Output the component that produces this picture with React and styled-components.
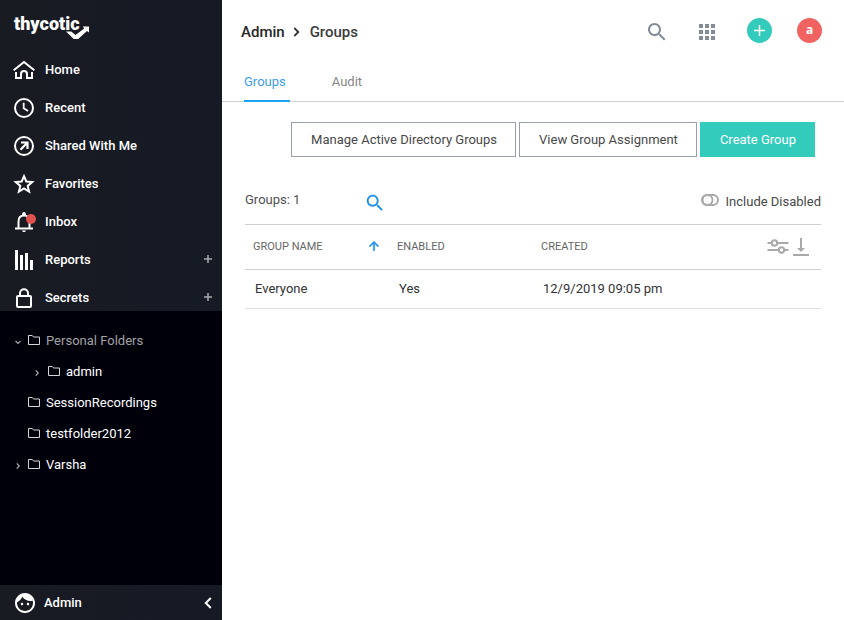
import React from "react";
import styled, { createGlobalStyle } from "styled-components";

const GlobalStyle = createGlobalStyle`
  *, *::before, *::after { box-sizing: border-box; }
  body {
    margin: 0;
    background: #fff;
    color: #333;
    font-family: Roboto, "Liberation Sans", sans-serif;
    font-size: 13px;
    line-height: 20px;
  }
  button {
    margin: 0;
    padding: 0;
    border: 0;
    background: none;
    color: inherit;
    font: inherit;
    cursor: pointer;
  }
  a { color: inherit; text-decoration: none; }
  svg { display: block; flex: none; }
`;

const Shell = styled.div`
  display: grid;
  grid-template-columns: 222px minmax(0, 1fr);
  min-height: 100vh;
`;

/* Sidebar */

const Sidebar = styled.aside`
  display: flex;
  flex-direction: column;
  background: #00000b;
  color: #fff;
`;

const SidebarTop = styled.div`
  background: linear-gradient(90deg, #191b22, #151a25);
`;

const Logo = styled.a`
  display: flex;
  align-items: flex-start;
  position: relative;
  height: 57px;
  padding: 14px 14px 0;
  font-size: 18px;
  font-weight: 900;
`;

const LogoMark = styled.svg`
  position: absolute;
  left: 66px;
  top: 25px;
`;

const NavList = styled.ul`
  display: grid;
  gap: 12px;
  margin: 0;
  padding: 0;
  list-style: none;
`;

const NavItem = styled.li`
  display: flex;
  align-items: center;
  justify-content: space-between;
  height: 26px;
  padding: 0 10px 0 12px;
`;

const NavLink = styled.a`
  display: flex;
  align-items: center;
  gap: 9px;
  font-weight: 500;
`;

const ExpandButton = styled.button`
  padding-bottom: 2px;
  color: #a9abb0;
`;

const FolderList = styled.ul`
  flex: 1;
  margin: 0;
  padding: 14px 0 0;
  list-style: none;
`;

const FolderRow = styled.li`
  display: flex;
  align-items: center;
  height: 31px;
  padding-left: ${(p) => (p.$nested ? 33 : 14)}px;
  color: ${(p) => (p.$muted ? "#a3a3a3" : "#fff")};
`;

const TwistySlot = styled.span`
  display: flex;
  width: ${(p) => (p.$nested ? 15 : 14)}px;
  color: #aaa;
`;

const FolderLink = styled.a`
  display: flex;
  align-items: center;
  gap: 6px;

  svg { margin-bottom: 2px; }
`;

const SidebarFooter = styled.footer`
  display: flex;
  align-items: center;
  justify-content: space-between;
  height: 35px;
  padding: 0 10px 0 13px;
  background: linear-gradient(90deg, #191b22, #151a25);
`;

const UserLink = styled.a`
  display: flex;
  align-items: center;
  gap: 7px;
  font-weight: 500;
`;

/* Main area */

const TopBar = styled.header`
  display: flex;
  align-items: center;
  justify-content: space-between;
  height: 64px;
  padding: 0 22px 0 19px;
`;

const Breadcrumb = styled.nav`
  display: flex;
  align-items: center;
  font-size: 15px;
  font-weight: 500;
  color: #3c3c3c;

  a { color: #262626; }
  svg { margin: 0 10px 0 8px; }
`;

const Tools = styled.div`
  display: flex;
  align-items: center;
  gap: 26px;
  color: #828c98;
`;

const RoundTools = styled.div`
  display: flex;
  gap: 25px;
  padding: 0 0 4px 2px;
`;

const Round = styled.button`
  display: grid;
  place-items: center;
  width: 25px;
  height: 25px;
  border-radius: 50%;
  background: ${(p) => p.$color};
  color: #fff;
  font-family: "Open Sans", sans-serif;
  font-size: 12px;
  font-weight: 700;
  line-height: 22px;
`;

const Tabs = styled.nav`
  display: flex;
  gap: 42px;
  padding-left: 22px;
  box-shadow: inset 0 -1px #cfd0d1;
`;

const Tab = styled.button`
  height: 38px;
  padding-right: 4px;
  border-bottom: 2px solid ${(p) => (p.$active ? "#1ea3f5" : "transparent")};
  color: ${(p) => (p.$active ? "#3b9eea" : "#858585")};
`;

const Actions = styled.div`
  display: flex;
  flex-wrap: wrap;
  justify-content: flex-end;
  gap: 3px;
  padding: 20px 29px 0;
`;

const ActionButton = styled.button`
  height: 35px;
  padding: 0 18px 0 19px;
  border: 1px solid ${(p) => (p.$primary ? "#33cbbb" : "#97a0ab")};
  background: ${(p) => (p.$primary ? "#33cbbb" : "#fff")};
  color: ${(p) => (p.$primary ? "#fff" : "#484848")};
`;

const Panel = styled.section`
  padding: 22px 23px 0;
`;

const PanelBar = styled.div`
  display: flex;
  align-items: center;
  justify-content: space-between;
  height: 45px;
`;

const CountGroup = styled.div`
  display: grid;
  grid-template-columns: 119px auto;
  align-items: center;
  color: #505050;
`;

const Count = styled.span`
  padding-bottom: 4px;
`;

const SearchButton = styled.button`
  padding-top: 2px;
  color: #1c8ff0;
`;

const Toggle = styled.label`
  display: flex;
  align-items: center;
  gap: 7px;
  position: relative;
  color: #484848;
  cursor: pointer;

  input {
    position: absolute;
    inset: 0;
    margin: 0;
    opacity: 0;
    cursor: pointer;
  }
  svg { margin-bottom: 3px; }
`;

const Table = styled.table`
  width: 100%;
  table-layout: fixed;
  border-spacing: 0;
  border-top: 1px solid #cfcfcf;
  text-align: left;

  th {
    height: 45px;
    padding: 0 8px;
    border-bottom: 1px solid #cfcfcf;
    color: #666;
    font-size: 11px;
    font-weight: 400;
  }
  td {
    height: 39px;
    padding: 0 10px;
    border-bottom: 1px solid #dfe1e2;
    white-space: nowrap;
  }
`;

const SortHeader = styled.button`
  display: flex;
  align-items: center;
  justify-content: space-between;
  width: 100%;

  svg {
    margin-bottom: 2px;
    color: #1c8ff0;
  }
`;

const TableTools = styled.div`
  display: flex;
  justify-content: flex-end;
  gap: 4px;
  padding-right: 4px;
  color: #a9a9a9;
`;

/* Icons */

function Icon({ size = 24, children }) {
  return (
    <svg width={size} height={size} viewBox="0 0 24 24" fill="currentColor" aria-hidden="true">
      {children}
    </svg>
  );
}

function LineIcon({ children }) {
  return (
    <svg width="24" height="24" viewBox="0 0 24 24" fill="none" stroke="currentColor" strokeWidth="2" aria-hidden="true">
      {children}
    </svg>
  );
}

const HomeIcon = () => (
  <LineIcon>
    <path d="M1.7 12.2 12 4l10.3 8.2" />
    <path d="M4 14v6h5v-4a3 3 0 0 1 6 0v4h5v-6" />
  </LineIcon>
);

const RecentIcon = () => (
  <LineIcon>
    <circle cx="12" cy="12" r="9" />
    <path d="M11.7 6.8v5.5l4.4 2.6" strokeWidth="1.8" />
  </LineIcon>
);

const SharedIcon = () => (
  <LineIcon>
    <circle cx="12" cy="12" r="9" />
    <path d="M9 8.5h6.5V15M15.3 8.7 8.5 15.7" strokeWidth="2.2" />
  </LineIcon>
);

const StarIcon = () => (
  <Icon>
    <path
      d="M12 4.200l2.300 5.300 5.900.5-4.500 3.900 1.400 5.700L12 16.500l-5.100 3.100 1.400-5.700L3.800 10l5.900-.5z"
      fill="none"
      stroke="currentColor"
      strokeWidth="2"
    />
  </Icon>
);

const InboxIcon = () => (
  <LineIcon>
    <path d="M6.500 18v-6.500C6.500 7.500 8.500 5.500 12 5.500s5.500 2 5.500 6V18" />
    <path d="M3 18.500h18" />
    <path d="M10 5C10 3 10.800 2 12 2s2 1 2 3zM10 20.500h4c-.4 1-1 1.500-2 1.500s-1.600-.5-2-1.500z" fill="currentColor" stroke="none" />
    <circle cx="19" cy="9" r="5" fill="#e0524f" stroke="none" />
  </LineIcon>
);

const ReportsIcon = () => (
  <Icon>
    <path d="M3 2h3v20H3zM8 7h3v15H8zM13 5h3v17h-3zM18 12h3v10h-3z" />
  </Icon>
);

const LockIcon = () => (
  <LineIcon>
    <rect x="5" y="10" width="14" height="11" rx="1" />
    <path d="M8 10V7.200a4 4 0 0 1 8 0V10" />
  </LineIcon>
);

const PlusIcon = ({ size, weight }) => (
  <svg width={size} height={size} viewBox={`0 0 ${size} ${size}`} stroke="currentColor" strokeWidth={weight} aria-hidden="true">
    <path d={`M${size / 2} 0v${size}M0 ${size / 2}h${size}`} />
  </svg>
);

const FolderIcon = () => (
  <svg width="12" height="12" viewBox="0 0 12 12" fill="none" stroke="#d6d6d6" aria-hidden="true">
    <path d="M.5 1.500h3.800l1.200 1.500h6v7.500H.5z" />
  </svg>
);

const Twisty = ({ open }) => (
  <svg width="8" height="8" viewBox="0 0 8 8" fill="none" stroke="currentColor" strokeWidth="1.200" aria-hidden="true">
    <path d={open ? "M1.500 4 4 6.500 6.500 4" : "M2.800 2.300 5.200 5 2.800 7.700"} />
  </svg>
);

const SearchIcon = ({ size }) => (
  <Icon size={size}>
    <path d="M15.5 14h-.79l-.28-.27C15.41 12.59 16 11.11 16 9.5 16 5.91 13.09 3 9.500 3S3 5.910 3 9.500 5.910 16 9.500 16c1.610 0 3.090-.59 4.230-1.570l.27.28v.79l5 4.990L20.490 19l-4.990-5zm-6 0C7.010 14 5 11.990 5 9.500S7.010 5 9.500 5 14 7.010 14 9.500 11.990 14 9.500 14z" />
  </Icon>
);

const AppsIcon = () => (
  <Icon>
    <path d="M4 8h4V4H4v4zm6 12h4v-4h-4v4zm-6 0h4v-4H4v4zm0-6h4v-4H4v4zm6 0h4v-4h-4v4zm6-10v4h4V4h-4zm-6 4h4V4h-4v4zm6 6h4v-4h-4v4zm0 6h4v-4h-4v4z" />
  </Icon>
);

const FaceIcon = () => (
  <Icon>
    <path d="M9 11.750c-.69 0-1.250.56-1.250 1.250s.56 1.250 1.250 1.250 1.250-.56 1.250-1.250-.56-1.250-1.250-1.250zm6 0c-.69 0-1.250.56-1.250 1.250s.56 1.250 1.250 1.250 1.250-.56 1.250-1.250-.56-1.250-1.250-1.250zM12 2C6.480 2 2 6.480 2 12s4.480 10 10 10 10-4.480 10-10S17.520 2 12 2zm0 18c-4.410 0-8-3.590-8-8 0-.29.02-.58.05-.86 2.360-1.050 4.230-2.980 5.210-5.370C11.070 8.330 14.050 10 17.420 10c.78 0 1.530-.09 2.250-.26.21.71.33 1.470.33 2.260 0 4.410-3.590 8-8 8z" />
  </Icon>
);

const navItems = [
  { label: "Home", Glyph: HomeIcon },
  { label: "Recent", Glyph: RecentIcon },
  { label: "Shared With Me", Glyph: SharedIcon },
  { label: "Favorites", Glyph: StarIcon },
  { label: "Inbox", Glyph: InboxIcon },
  { label: "Reports", Glyph: ReportsIcon, expandable: true },
  { label: "Secrets", Glyph: LockIcon, expandable: true },
];

const folders = [
  { label: "Personal Folders", twisty: "open", muted: true },
  { label: "admin", twisty: "closed", nested: true },
  { label: "SessionRecordings" },
  { label: "testfolder2012" },
  { label: "Varsha", twisty: "closed" },
];

const groups = [{ name: "Everyone", enabled: "Yes", created: "12/9/2019 09:05 pm" }];

export default function App() {
  return (
    <>
      <GlobalStyle />
      <Shell>
        <Sidebar>
          <SidebarTop>
            <Logo href="#">
              thycotic
              <LogoMark width="24" height="15" viewBox="0 0 24 15" fill="#fff" aria-hidden="true">
                <path d="M0 6.500h5.200l4.300 3.600L18.200 3.500 16.800 1.500H23v6l-2-1.500L12.200 14H7.700z" />
              </LogoMark>
            </Logo>
            <nav aria-label="Main">
              <NavList>
                {navItems.map(({ label, Glyph, expandable }) => (
                  <NavItem key={label}>
                    <NavLink href="#">
                      <Glyph />
                      {label}
                    </NavLink>
                    {expandable && (
                      <ExpandButton aria-label={`Expand ${label}`}>
                        <PlusIcon size={8} weight={1.5} />
                      </ExpandButton>
                    )}
                  </NavItem>
                ))}
              </NavList>
            </nav>
          </SidebarTop>
          <FolderList>
            {folders.map((f) => (
              <FolderRow key={f.label} $nested={f.nested} $muted={f.muted}>
                <TwistySlot $nested={f.nested}>{f.twisty && <Twisty open={f.twisty === "open"} />}</TwistySlot>
                <FolderLink href="#">
                  <FolderIcon />
                  {f.label}
                </FolderLink>
              </FolderRow>
            ))}
          </FolderList>
          <SidebarFooter>
            <UserLink href="#">
              <FaceIcon />
              Admin
            </UserLink>
            <button aria-label="Collapse sidebar">
              <svg width="8" height="12" viewBox="0 0 8 12" fill="none" stroke="#fff" strokeWidth="2" aria-hidden="true">
                <path d="M6.800 1 1.800 6l5 5" />
              </svg>
            </button>
          </SidebarFooter>
        </Sidebar>

        <main>
          <TopBar>
            <Breadcrumb aria-label="Breadcrumb">
              <a href="#">Admin</a>
              <svg width="7" height="10" viewBox="0 0 7 10" fill="none" stroke="#333" strokeWidth="1.800" aria-hidden="true">
                <path d="M1.300 1l4 4-4 4" />
              </svg>
              <span>Groups</span>
            </Breadcrumb>
            <Tools>
              <button aria-label="Search">
                <SearchIcon size={24} />
              </button>
              <button aria-label="Apps">
                <AppsIcon />
              </button>
              <RoundTools>
                <Round $color="#33cbbb" aria-label="Add">
                  <PlusIcon size={11} weight={1.5} />
                </Round>
                <Round $color="#f16360">a</Round>
              </RoundTools>
            </Tools>
          </TopBar>
          <Tabs aria-label="Sections">
            <Tab $active>Groups</Tab>
            <Tab>Audit</Tab>
          </Tabs>
          <Actions>
            <ActionButton>Manage Active Directory Groups</ActionButton>
            <ActionButton>View Group Assignment</ActionButton>
            <ActionButton $primary>Create Group</ActionButton>
          </Actions>
          <Panel>
            <PanelBar>
              <CountGroup>
                <Count>Groups: 1</Count>
                <SearchButton aria-label="Search groups">
                  <SearchIcon size={22} />
                </SearchButton>
              </CountGroup>
              <Toggle>
                <input type="checkbox" />
                <svg width="18" height="12" viewBox="0 0 18 12" fill="none" stroke="#a9a9a9" strokeWidth="2" aria-hidden="true">
                  <rect x="1" y="1" width="16" height="10" rx="5" />
                  <circle cx="6.500" cy="6" r="5" />
                </svg>
                Include Disabled
              </Toggle>
            </PanelBar>
            <Table>
              <thead>
                <tr>
                  <th scope="col">
                    <SortHeader>
                      GROUP NAME
                      <Icon size={14}>
                        <path d="M4 12l1.410 1.410L11 7.830V20h2V7.830l5.580 5.590L20 12l-8-8-8 8z" stroke="currentColor" />
                      </Icon>
                    </SortHeader>
                  </th>
                  <th scope="col">ENABLED</th>
                  <th scope="col">CREATED</th>
                  <th>
                    <TableTools>
                      <button aria-label="Columns">
                        <svg width="22" height="18" viewBox="0 0 22 18" fill="none" stroke="currentColor" strokeWidth="2" aria-hidden="true">
                          <path d="M.5 5h4M10.500 5h11M.5 12h11M17.500 12h4" />
                          <circle cx="7.500" cy="5" r="2.700" />
                          <circle cx="14.500" cy="12" r="2.700" />
                        </svg>
                      </button>
                      <button aria-label="Download">
                        <svg width="16" height="18" viewBox="0 0 16 18" fill="currentColor" aria-hidden="true">
                          <path d="M7 0h2v10h3l-4 4-4-4h3zM0 16h16v2H0z" />
                        </svg>
                      </button>
                    </TableTools>
                  </th>
                </tr>
              </thead>
              <tbody>
                {groups.map((g) => (
                  <tr key={g.name}>
                    <td>{g.name}</td>
                    <td>{g.enabled}</td>
                    <td>{g.created}</td>
                    <td />
                  </tr>
                ))}
              </tbody>
            </Table>
          </Panel>
        </main>
      </Shell>
    </>
  );
}
